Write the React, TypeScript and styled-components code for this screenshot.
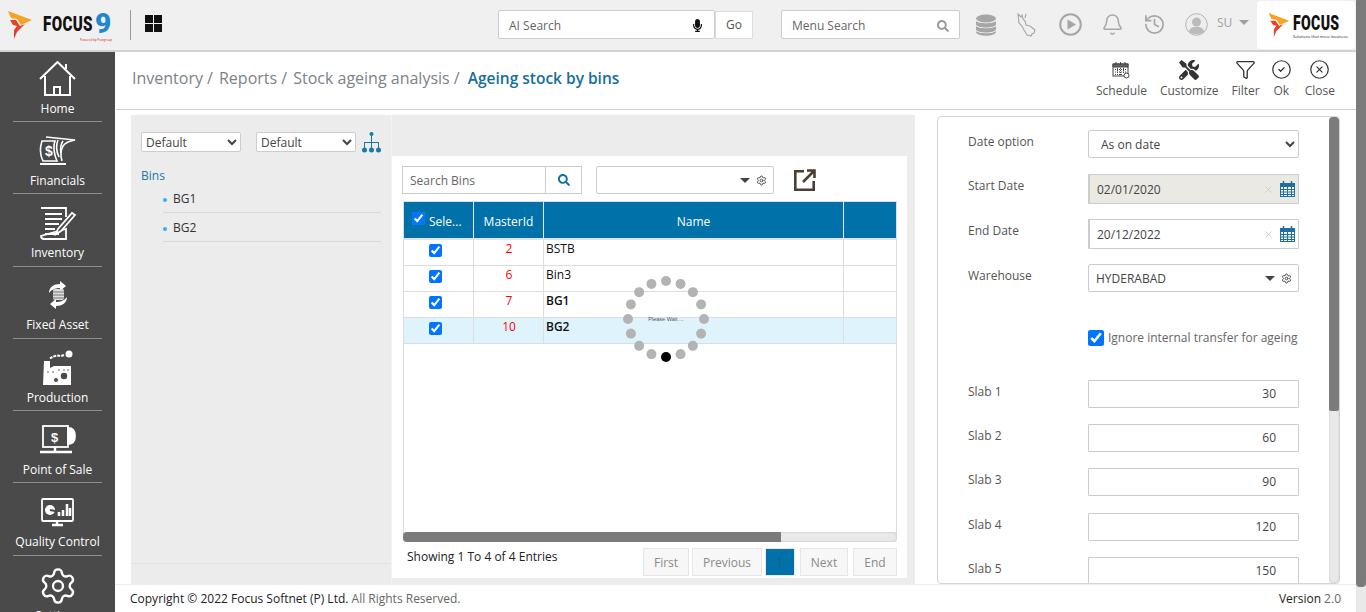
import React from 'react';
import styled, { createGlobalStyle } from 'styled-components';
import {
  Bell,
  CircleCheck,
  CircleX,
  Filter,
  History,
  Settings,
  X,
} from 'lucide-react';
import { FaMicrophone, FaSearch, FaTools } from 'react-icons/fa';

const GlobalStyle = createGlobalStyle`
  html, body {
    margin: 0;
    height: 100%;
    overflow: hidden;
    background: #fff;
    font-family: "Open Sans", "Liberation Sans", sans-serif;
    font-size: 12px;
    color: #444;
  }
  * { box-sizing: border-box; }
`;

const Shell = styled.div`
  display: flex;
  width: 1366px;
  height: 612px;
  overflow: hidden;
`;

const Main = styled.div`
  display: flex;
  flex-direction: column;
  width: 1356px;
  height: 100%;
`;

const PageScroll = styled.div`
  width: 10px;
  height: 100%;
  background: #e9e9e9;
`;

const PageThumb = styled.div`
  height: 587px;
  background: #7b7b7b;
  border-radius: 0 0 4px 4px;
`;

/* header */

const Header = styled.header`
  display: flex;
  align-items: center;
  flex: none;
  height: 52px;
  background: #f0f0f0;
  border-bottom: 2px solid #d2d2d2;
  padding: 0 1px 1px 8px;
`;

const BrandMark = styled.div`
  display: flex;
  align-items: center;
  width: 123px;
  height: 30px;
  border-right: 1px solid #999;
  margin-right: 14px;
`;

const Wordmark = styled.div`
  position: relative;
  display: flex;
  align-items: center;
  margin-left: 11px;
  height: 30px;
`;

const FocusWord = styled.span<{ $size: number; $squeeze: number }>`
  display: inline-block;
  font-family: "Roboto", "Liberation Sans", sans-serif;
  font-weight: 900;
  font-size: ${p => p.$size}px;
  line-height: 1;
  color: #111;
  transform: scaleX(${p => p.$squeeze});
  transform-origin: left center;
  letter-spacing: 0.5px;
`;

const NineWord = styled.span`
  position: absolute;
  left: 52px;
  top: 0;
  font-family: "Roboto", "Liberation Sans", sans-serif;
  font-weight: 900;
  font-size: 28px;
  line-height: 27px;
  color: #1e88cf;
`;

const Tiny = styled.span`
  position: absolute;
  left: 37px;
  top: 28px;
  font-size: 3px;
  line-height: 4px;
  color: #c22;
  white-space: nowrap;
`;

const GridMark = styled.div`
  display: grid;
  grid-template-columns: 8px 8px;
  grid-auto-rows: 8px;
  gap: 1px;
  margin: 0 336px 2px 0;
  span { background: #111; }
`;

const HeaderBox = styled.div<{ $w: number }>`
  display: flex;
  align-items: center;
  justify-content: space-between;
  flex: none;
  width: ${p => p.$w}px;
  height: 29px;
  background: #fff;
  border: 1px solid #ccc;
  border-radius: 2px;
  padding: 2px 10px 0;
  color: #666;
  font-size: 12px;
`;

const GoButton = styled.div`
  display: flex;
  align-items: center;
  justify-content: center;
  flex: none;
  width: 38px;
  height: 28px;
  background: #fff;
  border: 1px solid #ddd;
  margin-right: 28px;
  color: #555;
`;

const StatusIcons = styled.div`
  display: flex;
  align-items: center;
  flex: none;
  gap: 19px;
  width: 272px;
  margin-left: 15px;
  color: #a6a6a6;
  svg { flex: none; }
  svg:nth-child(2) { margin-left: 1px; }
  svg:nth-child(3) { margin-left: 3px; }
`;

const UserName = styled.div`
  display: flex;
  align-items: center;
  gap: 7px;
  margin: 0 0 5px -10px;
  color: #a0a0a0;
`;

const Caret = styled.span<{ $color?: string }>`
  width: 0;
  height: 0;
  border-left: 5px solid transparent;
  border-right: 5px solid transparent;
  border-top: 5px solid ${p => p.$color || '#a0a0a0'};
`;

const CompanyBox = styled.div`
  display: flex;
  align-items: center;
  flex: none;
  gap: 3px;
  width: 98px;
  height: 48px;
  margin-left: 10px;
  background: #fff;
  border-radius: 4px;
  padding-left: 11px;
`;

const CompanyWord = styled.div`
  position: relative;
  width: 48px;
  height: 30px;
  padding-top: 3px;
`;

const Slogan = styled.span`
  position: absolute;
  left: 0;
  top: 24px;
  font-size: 4px;
  line-height: 5px;
  white-space: nowrap;
  color: #222;
`;

/* sidebar */

const Row = styled.div`
  display: flex;
  flex: 1;
  min-height: 0;
`;

const Sidebar = styled.nav`
  flex: none;
  width: 115px;
  background: #4a4a4a;
  overflow: hidden;
  padding: 0 13px;
`;

const NavItem = styled.div`
  display: flex;
  flex-direction: column;
  align-items: center;
  justify-content: flex-end;
  height: 72.3px;
  border-bottom: 1px solid #8e8e8e;
  padding-bottom: 4.5px;
  color: #fff;
  &:first-child { height: 70px; }
  &:last-child { border-bottom: 0; }
`;

const NavIcon = styled.div`
  display: flex;
  align-items: center;
  justify-content: center;
  height: 40px;
  margin-bottom: 2px;
`;

const NavLabel = styled.div`
  height: 16px;
  line-height: 16px;
  font-size: 12px;
  white-space: nowrap;
`;

/* content */

const Content = styled.div`
  display: flex;
  flex-direction: column;
  flex: 1;
  min-width: 0;
`;

const TitleBar = styled.div`
  display: flex;
  align-items: center;
  justify-content: space-between;
  flex: none;
  height: 58px;
  margin-left: 1px;
  border-bottom: 1px solid #d2d2d2;
  padding: 0 21px 0 16px;
`;

const Crumbs = styled.div`
  display: flex;
  align-items: baseline;
  gap: 6px;
  font-size: 16px;
  color: #7c8287;
  margin-bottom: 6px;
`;

const CrumbCurrent = styled.span`
  margin-left: 2px;
  color: #156e9e;
  font-size: 15.5px;
  font-weight: 600;
`;

const Actions = styled.div`
  display: flex;
  gap: 13px;
  margin-bottom: 4px;
`;

const Action = styled.div<{ $tight?: boolean }>`
  display: flex;
  flex-direction: column;
  align-items: center;
  gap: 2px;
  margin-right: ${p => (p.$tight ? -2 : 0)}px;
  color: #555;
  font-size: 12px;
  line-height: 16px;
`;

const ActionIcon = styled.div`
  display: flex;
  align-items: center;
  justify-content: center;
  height: 22px;
  color: #333;
`;

const Workspace = styled.div`
  display: flex;
  flex: 1;
  min-height: 0;
  padding: 5px 0 0 16px;
  overflow: hidden;
`;

const TreePanel = styled.aside`
  display: flex;
  flex-direction: column;
  flex: none;
  width: 260px;
  background: #ececec;
  padding: 17px 10px 0;
`;

const TreeTools = styled.div`
  display: flex;
  align-items: center;
  gap: 15px;
  height: 20px;
`;

const Picker = styled.select<{ $w: number; $h: number; $pad?: number }>`
  width: ${p => p.$w}px;
  height: ${p => p.$h}px;
  background: #fff;
  border: 1px solid #ccc;
  border-radius: 2px;
  color: #444;
  font: 12px "Open Sans", "Liberation Sans", sans-serif;
  padding-left: ${p => p.$pad || 0}px;
  outline: none;
`;

const TreeIconWrap = styled.div`
  display: flex;
  margin-left: -9px;
`;

const TreeRoot = styled.div`
  margin-top: 16px;
  color: #1b78a8;
  line-height: 16px;
`;

const TreeList = styled.div`
  margin-left: 22px;
  flex: 1;
`;

const TreeLeaf = styled.div`
  display: flex;
  align-items: center;
  gap: 6px;
  height: 29px;
  border-bottom: 1px solid #d8d8d8;
  color: #333;
  &::before {
    content: '';
    width: 4px;
    height: 4px;
    margin-top: 4px;
    border-radius: 50%;
    background: #2bb6ee;
  }
`;

const TreeFoot = styled.div`
  height: 21px;
  margin: 0 -10px;
  border-top: 1px solid #e2e2e2;
`;

const ListPanel = styled.section`
  flex: none;
  width: 524px;
  background: #ececec;
  padding: 41px 8px 6px 0;
  border-left: 1px solid #f4f4f4;
`;

const ListCard = styled.div`
  display: flex;
  flex-direction: column;
  height: 100%;
  background: #fff;
  padding: 10px 10px 0;
`;

const ListTools = styled.div`
  display: flex;
  align-items: center;
  height: 28px;
  margin-bottom: 7px;
`;

const SearchBox = styled.div`
  display: flex;
  width: 180px;
  height: 28px;
  border: 1px solid #ccc;
  color: #666;
  margin-right: 14px;
`;

const SearchText = styled.div`
  flex: 1;
  padding: 1px 0 0 7px;
  line-height: 26px;
`;

const SearchButton = styled.div`
  display: flex;
  align-items: center;
  justify-content: center;
  width: 36px;
  border-left: 1px solid #ccc;
  color: #0d6fa5;
`;

const Combo = styled.div<{ $w: number }>`
  display: flex;
  align-items: center;
  justify-content: space-between;
  width: ${p => p.$w}px;
  height: 28px;
  background: #fff;
  border: 1px solid #ccc;
  border-radius: 2px;
  padding: 0 6px 0 7px;
  color: #444;
`;

const ComboTail = styled.div`
  display: flex;
  align-items: center;
  gap: 6px;
  margin-left: auto;
  color: #444;
`;

const ExportLink = styled.div`
  display: flex;
  margin-left: 20px;
  color: #4a3f35;
`;

const TableBox = styled.div`
  position: relative;
  flex: none;
  width: 494px;
  height: 333px;
  margin-left: 1px;
  border: 1px solid #ddd;
  overflow: hidden;
`;

const TableHead = styled.div`
  display: grid;
  grid-template-columns: 70px 70px 300px 53px;
  height: 38px;
  background: #0071a9;
  border-bottom: 2px solid #e4e4e4;
  color: #fff;
`;

const HeadCell = styled.div<{ $start?: boolean }>`
  display: flex;
  align-items: center;
  justify-content: ${p => (p.$start ? 'flex-start' : 'center')};
  gap: 4px;
  padding: 2px 0 0 ${p => (p.$start ? 8 : 0)}px;
  border-right: 1px solid #e8e8e8;
  &:last-child { border-right: 0; }
`;

const HeadCheck = styled.input`
  width: 13px;
  height: 13px;
  margin: -5px 0 0;
  accent-color: #0075ff;
`;

const TableRow = styled.div<{ $active?: boolean }>`
  display: grid;
  grid-template-columns: 70px 70px 300px 53px;
  height: 26px;
  background: ${p => (p.$active ? '#def3fc' : '#fff')};
  border-bottom: 1px solid #ddd;
`;

const Cell = styled.div<{ $kind?: 'check' | 'id' | 'name'; $strong?: boolean }>`
  display: flex;
  align-items: ${p => (p.$kind === 'check' ? 'center' : 'flex-start')};
  justify-content: ${p => (p.$kind === 'name' ? 'flex-start' : 'center')};
  padding: ${p => (p.$kind === 'name' ? '0 0 0 2px' : p.$kind === 'id' ? '0 0 0 1px' : '0')};
  border-right: 1px solid #ddd;
  color: ${p => (p.$kind === 'id' ? '#f00' : '#111')};
  font-weight: ${p => (p.$strong ? 600 : 400)};
  line-height: 17px;
  &:last-child { border-right: 0; }
`;

const RowCheck = styled.input`
  width: 13px;
  height: 13px;
  margin: 0 7px 5px 0;
  accent-color: #0075ff;
`;

const Spinner = styled.div`
  position: absolute;
  left: 262px;
  top: 117px;
  width: 0;
  height: 0;
`;

const SpinnerDot = styled.span<{ $on?: boolean }>`
  position: absolute;
  left: -5px;
  top: -5px;
  width: 10px;
  height: 10px;
  border-radius: 50%;
  background: ${p => (p.$on ? '#000' : '#b3b3b3')};
`;

const SpinnerText = styled.span`
  position: absolute;
  left: -30px;
  top: -4px;
  width: 60px;
  text-align: center;
  font: 5.5px/8px "Liberation Sans", sans-serif;
  color: #555;
`;

const HScroll = styled.div`
  flex: none;
  width: 494px;
  height: 10px;
  margin: -2px 0 0 1px;
  background: #e9e9e9;
  border-radius: 4px;
  box-shadow: inset 0 0 2px #aaa;
  position: relative;
`;

const HThumb = styled.div`
  width: 378px;
  height: 100%;
  background: #7b7b7b;
  border-radius: 4px 0 0 4px;
`;

const ListFoot = styled.div`
  display: flex;
  justify-content: space-between;
  align-items: flex-start;
  margin-top: 6px;
  padding-left: 5px;
`;

const Showing = styled.div`
  color: #222;
  line-height: 17px;
`;

const Pager = styled.div`
  display: flex;
  gap: 5px;
`;

const PageBtn = styled.div<{ $w: number; $active?: boolean }>`
  display: flex;
  align-items: center;
  justify-content: center;
  width: ${p => p.$w}px;
  height: 28px;
  background: ${p => (p.$active ? '#0071a9' : '#f7f7f7')};
  border: 1px solid ${p => (p.$active ? '#e8e8e8' : '#e6e6e6')};
  color: ${p => (p.$active ? '#2a5a78' : '#8a8a8a')};
  &:nth-child(-n + 2) { margin-right: -2px; }
`;

const FormCard = styled.section`
  display: flex;
  flex: none;
  width: 403px;
  height: 468px;
  margin: 1px 0 0 22px;
  background: #fff;
  border: 1px solid #d4d4d4;
  border-radius: 4px;
  overflow: hidden;
`;

const Form = styled.div`
  display: grid;
  grid-template-columns: 120px 211px;
  grid-template-rows: 44px 45px 45px 66px 50px 44px 44px 45px 44px;
  flex: 1;
  padding: 13px 0 0 30px;
  overflow: hidden;
`;

const FieldLabel = styled.div`
  padding-top: 4px;
  line-height: 16px;
  color: #555;
`;

const TextBox = styled.div<{ $disabled?: boolean; $right?: boolean; $tall?: boolean }>`
  display: flex;
  align-items: center;
  justify-content: ${p => (p.$right ? 'flex-end' : 'flex-start')};
  width: 211px;
  height: ${p => (p.$tall ? 30 : 28)}px;
  background: ${p => (p.$disabled ? '#eae9e3' : '#fff')};
  border: 1px solid #ccc;
  border-left-width: ${p => (p.$tall ? 2 : 1)}px;
  border-radius: 1px;
  padding: ${p => (p.$right ? '0 22px 1px 0' : '0 3px 0 7px')};
  color: #444;
`;

const ClearIcon = styled.span`
  display: flex;
  margin-left: auto;
  margin-right: 6px;
  color: #ccc;
`;

const CheckLine = styled.label`
  display: flex;
  align-items: center;
  gap: 4px;
  height: 16px;
  line-height: 14px;
  color: #666;
  white-space: nowrap;
  input {
    width: 16px;
    height: 16px;
    margin: 0;
    accent-color: #0075ff;
  }
`;

const FormScroll = styled.div`
  flex: none;
  width: 10px;
  background: #e9e9e9;
  border-radius: 4px;
  box-shadow: inset 0 0 2px #bbb;
`;

const FormThumb = styled.div`
  height: 294px;
  background: #7b7b7b;
  border-radius: 4px 4px 2px 2px;
`;

const Footer = styled.footer`
  display: flex;
  align-items: center;
  justify-content: space-between;
  flex: none;
  height: 28px;
  background: #fff;
  border-top: 1px solid #ececec;
  padding: 0 15px;
  color: #666;
`;

const Strong = styled.span`
  color: #222;
  font-weight: 500;
`;

/* drawings */

const FlameLogo = ({ w, h }: { w: number; h: number }) => (
  <svg width={w} height={h} viewBox="0 0 24 28">
    <polygon points="0,0 24,9 13,14 9,8 3,7" fill="#f6a323" />
    <polygon points="2,9 8,9 12,15 17,13 9,21 6,28 6,19 9,15 5,14" fill="#e2432a" />
  </svg>
);

const TreeIcon = () => (
  <svg width="19" height="21" viewBox="0 0 19 21" fill="#1b78a8">
    <circle cx="9.5" cy="2" r="2" />
    <path d="M9 3h1v7h7v6h-1v-5h-6v5H9v-5H3v5H2v-6h7z" />
    <circle cx="2.5" cy="18" r="2.5" />
    <circle cx="9.5" cy="18" r="2.5" />
    <circle cx="16.5" cy="18" r="2.5" />
  </svg>
);

const DatabaseIcon = () => (
  <svg width="22" height="22" viewBox="0 0 22 22" fill="#a6a6a6">
    <ellipse cx="11" cy="4.5" rx="10" ry="4" />
    <path d="M1 7c2 3 18 3 20 0v3.5c-1 4-19 4-20 0zM1 12c2 3 18 3 20 0v3.500c-1 4-19 4-20 0z" />
    <path d="M1 17c2 3 18 3 20 0v1c-1 5-19 5-20 0z" />
  </svg>
);

const DeerIcon = () => (
  <svg width="20" height="24" viewBox="0 0 20 24" fill="none" stroke="#a6a6a6" strokeWidth="1.1">
    <path d="M1 1l3 3 1-2 1 4 2 2 1 4 4 1 5 4-1 3-2 1-1 2-4-1-3-5-2-4-3-3z" />
    <path d="M9 1l-1 4" />
  </svg>
);

const PlayIcon = () => (
  <svg width="23" height="23" viewBox="0 0 23 23">
    <circle cx="11.5" cy="11.5" r="10.3" fill="none" stroke="#a6a6a6" strokeWidth="2" />
    <polygon points="8.5,6.5 17,11.5 8.5,16.5" fill="#a6a6a6" />
  </svg>
);

const AvatarIcon = () => (
  <svg width="23" height="23" viewBox="0 0 23 23">
    <circle cx="11.5" cy="11.5" r="10.8" fill="#eee" stroke="#b5b5b5" />
    <circle cx="11.5" cy="9" r="4.5" fill="#bbb" />
    <path d="M4 19c1-5 4-5 7.500-5s6.500 0 7.500 5c-4 3-11 3-15 0z" fill="#bbb" />
  </svg>
);

const ScheduleIcon = () => (
  <svg width="18" height="18" viewBox="0 0 18 18" fill="none" stroke="#444">
    <rect x="1" y="3" width="15" height="12" fill="#fff" />
    <path d="M1 3h15v3H1z" fill="#666" />
    <path d="M4 1v3M8.500 1v3M13 1v3" />
    <path d="M3 8.500h11M3 11h11M3 13.500h8M5.500 7v8M8.500 7v8M11.500 7v6" strokeDasharray="1 1" />
    <circle cx="14.500" cy="14.500" r="2.500" fill="#fff" />
  </svg>
);

const CalendarIcon = () => (
  <svg width="15" height="16" viewBox="0 0 15 16" fill="none" stroke="#1b6fa3">
    <path d="M3.500 0v3M11.500 0v3" strokeWidth="1.500" />
    <rect x="0.500" y="2.500" width="14" height="13" fill="#fff" />
    <rect x="0.500" y="2.500" width="14" height="3" fill="#1b6fa3" />
    <path d="M0.500 8.500h14M0.500 11h14M0.500 13.500h14M3.500 6v9M7.500 6v9M11.500 6v9" />
  </svg>
);

const ExportIcon = () => (
  <svg width="22" height="22" viewBox="0 0 22 22" fill="none" stroke="currentColor" strokeWidth="2.6">
    <path d="M10 2.300H1.300v18.400h18.400V12" />
    <path d="M9 13L20 2M13 1.500h7.500V9" />
  </svg>
);

const HomeIcon = () => (
  <svg width="37" height="36" viewBox="0 0 37 36" fill="none" stroke="#fff" strokeWidth="2">
    <path d="M1 18L18.500 1 36 18" />
    <path d="M27 8V3" />
    <path d="M6 15v19h9v-8h6v8h10V15" />
    <path d="M11 34h15" />
  </svg>
);

const MoneyIcon = () => (
  <svg width="37" height="29" viewBox="0 0 37 29" fill="none" stroke="#fff" strokeWidth="1.600">
    <path d="M7 1l29 3c-6 1-10 3-12 6-2 4-3 9-1 15" />
    <path d="M3 5h13c-2 5-1 14 2 20H4C1 19 1 11 3 5z" />
    <path d="M19 4c-2 5-2 11 1 17M24 5c-2 3-3 7-2 12" />
    <path d="M1 28h26" strokeWidth="2" />
    <text x="6" y="20" fill="#fff" stroke="none" fontSize="14" fontWeight="700" fontFamily="Liberation Sans">$</text>
  </svg>
);

const DocPenIcon = () => (
  <svg width="38" height="33" viewBox="0 0 38 33" fill="none" stroke="#fff" strokeWidth="1.800">
    <path d="M2 1h25v9M27 22v10H5c-2 0-3-1-3-3z" />
    <path d="M6 7h17M6 12h17M6 17h14M6 22h10M6 27h14" />
    <path d="M36 8L22 24l-5 3 2-5L33 6z" fill="#4a4a4a" />
  </svg>
);

const AssetIcon = () => (
  <svg width="24" height="28" viewBox="0 0 24 28" fill="none">
    <path d="M3 12C3 6 8 3 14 3l0-3 6 5-6 5V7c-4 0-8 1-11 5z" fill="#fff" />
    <path d="M21 16c0 6-5 9-11 9v3l-6-5 6-5v3c4 0 8-1 11-5z" fill="#fff" />
    <rect x="7" y="8" width="11" height="11" rx="2" fill="#ddd" />
    <path d="M7 11h11M7 14h11M7 17h11" stroke="#777" />
  </svg>
);

const FactoryIcon = () => (
  <svg width="31" height="36" viewBox="0 0 31 36">
    <circle cx="27" cy="4" r="3.500" fill="#fff" />
    <path d="M22 5l-3 1-3-0.500-5 1-3 2" stroke="#fff" strokeWidth="2" strokeDasharray="3 1" fill="none" />
    <path d="M2 11h6v7l4-2h17v19H1z" fill="#fff" />
    <circle cx="22" cy="26" r="4" fill="#4a4a4a" stroke="#fff" strokeWidth="1.500" />
    <circle cx="14" cy="30" r="2.500" fill="#4a4a4a" stroke="#fff" />
    <path d="M5 22h2M10 22h2M16 20h2M21 20h2M25 20h2" stroke="#666" />
  </svg>
);

const PosIcon = () => (
  <svg width="37" height="29" viewBox="0 0 37 29" fill="none" stroke="#fff" strokeWidth="1.800">
    <rect x="4" y="1" width="25" height="21" />
    <path d="M29 3c5 0 7 3 7 8s-2 8-7 8z" fill="#fff" />
    <path d="M16 22v4M1 27h32" strokeWidth="2.500" />
    <text x="12" y="17" fill="#fff" stroke="none" fontSize="13" fontWeight="700" fontFamily="Liberation Sans">$</text>
  </svg>
);

const ChartIcon = () => (
  <svg width="33" height="29" viewBox="0 0 33 29" fill="none" stroke="#fff" strokeWidth="1.800">
    <rect x="1" y="1" width="31" height="22" rx="1" />
    <path d="M16 23v3M11 27h11" strokeWidth="2.500" />
    <circle cx="9" cy="12" r="5" fill="#fff" stroke="none" />
    <path d="M9 12l5 1" stroke="#4a4a4a" />
    <path d="M18 18v-4M22 18v-6M26 18V6M29 18v-8" strokeWidth="2.500" />
  </svg>
);

const ComboEnd = () => (
  <ComboTail>
    <Caret $color="#444" />
    <Settings size={11} />
  </ComboTail>
);

const NAV = [
  { label: 'Home', icon: <HomeIcon /> },
  { label: 'Financials', icon: <MoneyIcon /> },
  { label: 'Inventory', icon: <DocPenIcon /> },
  { label: 'Fixed Asset', icon: <AssetIcon /> },
  { label: 'Production', icon: <FactoryIcon /> },
  { label: 'Point of Sale', icon: <PosIcon /> },
  { label: 'Quality Control', icon: <ChartIcon /> },
  { label: 'Settings', icon: <Settings size={40} strokeWidth={1.4} /> },
];

const ROWS = [
  { id: 2, name: 'BSTB' },
  { id: 6, name: 'Bin3' },
  { id: 7, name: 'BG1', strong: true },
  { id: 10, name: 'BG2', strong: true, active: true },
];

const SLABS = [30, 60, 90, 120, 150];

const noop = () => undefined;

export default function App() {
  return (
    <Shell>
      <GlobalStyle />
      <Main>
        <Header>
          <BrandMark>
            <FlameLogo w={24} h={28} />
            <Wordmark>
              <FocusWord $size={21} $squeeze={0.72}>FOCUS</FocusWord>
              <NineWord>9</NineWord>
              <Tiny>Powered by Prangroup</Tiny>
            </Wordmark>
          </BrandMark>
          <GridMark>
            <span />
            <span />
            <span />
            <span />
          </GridMark>
          <HeaderBox $w={217}>
            AI Search
            <FaMicrophone size={13} color="#111" />
          </HeaderBox>
          <GoButton>Go</GoButton>
          <HeaderBox $w={179}>
            Menu Search
            <FaSearch size={12} color="#999" />
          </HeaderBox>
          <StatusIcons>
            <DatabaseIcon />
            <DeerIcon />
            <PlayIcon />
            <Bell size={23} strokeWidth={1.5} />
            <History size={23} strokeWidth={1.8} />
            <AvatarIcon />
            <UserName>
              SU
              <Caret />
            </UserName>
          </StatusIcons>
          <CompanyBox>
            <FlameLogo w={22} h={24} />
            <CompanyWord>
              <FocusWord $size={21} $squeeze={0.67}>FOCUS</FocusWord>
              <Slogan>Solutions that move business</Slogan>
            </CompanyWord>
          </CompanyBox>
        </Header>
        <Row>
          <Sidebar>
            {NAV.map(item => (
              <NavItem key={item.label}>
                <NavIcon>{item.icon}</NavIcon>
                <NavLabel>{item.label}</NavLabel>
              </NavItem>
            ))}
          </Sidebar>
          <Content>
            <TitleBar>
              <Crumbs>
                <span>Inventory /</span>
                <span>Reports /</span>
                <span>Stock ageing analysis /</span>
                <CrumbCurrent>Ageing stock by bins</CrumbCurrent>
              </Crumbs>
              <Actions>
                <Action>
                  <ActionIcon><ScheduleIcon /></ActionIcon>
                  Schedule
                </Action>
                <Action>
                  <ActionIcon><FaTools size={20} /></ActionIcon>
                  Customize
                </Action>
                <Action $tight>
                  <ActionIcon><Filter size={21} strokeWidth={1.5} /></ActionIcon>
                  Filter
                </Action>
                <Action>
                  <ActionIcon><CircleCheck size={21} strokeWidth={1.4} /></ActionIcon>
                  Ok
                </Action>
                <Action>
                  <ActionIcon><CircleX size={21} strokeWidth={1.4} /></ActionIcon>
                  Close
                </Action>
              </Actions>
            </TitleBar>
            <Workspace>
              <TreePanel>
                <TreeTools>
                  <Picker $w={100} $h={20} defaultValue="Default">
                    <option>Default</option>
                  </Picker>
                  <Picker $w={100} $h={20} defaultValue="Default">
                    <option>Default</option>
                  </Picker>
                  <TreeIconWrap><TreeIcon /></TreeIconWrap>
                </TreeTools>
                <TreeRoot>Bins</TreeRoot>
                <TreeList>
                  <TreeLeaf>BG1</TreeLeaf>
                  <TreeLeaf>BG2</TreeLeaf>
                </TreeList>
                <TreeFoot />
              </TreePanel>
              <ListPanel>
                <ListCard>
                  <ListTools>
                    <SearchBox>
                      <SearchText>Search Bins</SearchText>
                      <SearchButton><FaSearch size={12} /></SearchButton>
                    </SearchBox>
                    <Combo $w={178}><ComboEnd /></Combo>
                    <ExportLink><ExportIcon /></ExportLink>
                  </ListTools>
                  <TableBox>
                    <TableHead>
                      <HeadCell $start>
                        <HeadCheck type="checkbox" checked onChange={noop} />
                        Sele...
                      </HeadCell>
                      <HeadCell>MasterId</HeadCell>
                      <HeadCell>Name</HeadCell>
                      <HeadCell />
                    </TableHead>
                    {ROWS.map(row => (
                      <TableRow key={row.id} $active={row.active}>
                        <Cell $kind="check">
                          <RowCheck type="checkbox" checked onChange={noop} />
                        </Cell>
                        <Cell $kind="id">{row.id}</Cell>
                        <Cell $kind="name" $strong={row.strong}>{row.name}</Cell>
                        <Cell />
                      </TableRow>
                    ))}
                    <Spinner>
                      {Array.from({ length: 16 }, (_, i) => (
                        <SpinnerDot
                          key={i}
                          $on={i === 8}
                          style={{ transform: `rotate(${i * 22.5}deg) translateY(-38px)` }}
                        />
                      ))}
                      <SpinnerText>Please Wait ...</SpinnerText>
                    </Spinner>
                  </TableBox>
                  <HScroll><HThumb /></HScroll>
                  <ListFoot>
                    <Showing>Showing 1 To 4 of 4 Entries</Showing>
                    <Pager>
                      <PageBtn $w={46}>First</PageBtn>
                      <PageBtn $w={70}>Previous</PageBtn>
                      <PageBtn $w={30} $active>1</PageBtn>
                      <PageBtn $w={48}>Next</PageBtn>
                      <PageBtn $w={44}>End</PageBtn>
                    </Pager>
                  </ListFoot>
                </ListCard>
              </ListPanel>
              <FormCard>
                <Form>
                  <FieldLabel>Date option</FieldLabel>
                  <Picker $w={211} $h={28} $pad={8} defaultValue="As on date">
                    <option>As on date</option>
                  </Picker>
                  <FieldLabel>Start Date</FieldLabel>
                  <TextBox $disabled $tall>
                    02/01/2020
                    <ClearIcon><X size={11} /></ClearIcon>
                    <CalendarIcon />
                  </TextBox>
                  <FieldLabel>End Date</FieldLabel>
                  <TextBox $tall>
                    20/12/2022
                    <ClearIcon><X size={11} /></ClearIcon>
                    <CalendarIcon />
                  </TextBox>
                  <FieldLabel>Warehouse</FieldLabel>
                  <Combo $w={211}>
                    HYDERABAD
                    <ComboEnd />
                  </Combo>
                  <span />
                  <CheckLine>
                    <input type="checkbox" checked onChange={noop} />
                    Ignore internal transfer for ageing
                  </CheckLine>
                  {SLABS.map((value, i) => (
                    <React.Fragment key={value}>
                      <FieldLabel>Slab {i + 1}</FieldLabel>
                      <TextBox $right>{value}</TextBox>
                    </React.Fragment>
                  ))}
                </Form>
                <FormScroll><FormThumb /></FormScroll>
              </FormCard>
            </Workspace>
            <Footer>
              <span>
                <Strong>Copyright © 2022 Focus Softnet (P) Ltd.</Strong> All Rights Reserved.
              </span>
              <span>
                <Strong>Version</Strong> 2.0
              </span>
            </Footer>
          </Content>
        </Row>
      </Main>
      <PageScroll><PageThumb /></PageScroll>
    </Shell>
  );
}
